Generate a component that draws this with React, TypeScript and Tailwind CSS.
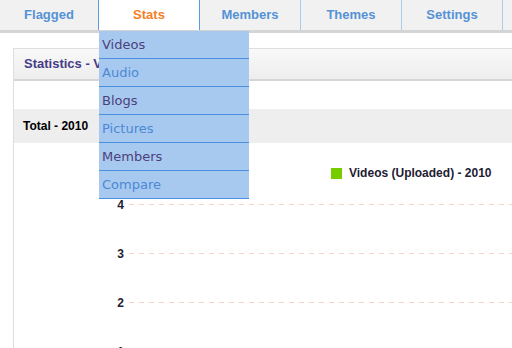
import React from 'react';

const tabs = [
  { label: 'Flagged', cls: 'w-[98px]' },
  { label: 'Stats', cls: 'w-[102px] bg-white border-x border-[#5b9be0] text-[#f58026]', active: true },
  { label: 'Members', cls: 'w-[101px] border-r border-[#a9cdee]' },
  { label: 'Themes', cls: 'w-[101px] border-r border-[#a9cdee]' },
  { label: 'Settings', cls: 'w-[101px] border-r border-[#a9cdee]' },
];

const menu = ['Videos', 'Audio', 'Blogs', 'Pictures', 'Members', 'Compare'];

const grid = [4, 3, 2, 1];

export default function App() {
  return (
    <div className="relative w-[512px] h-[348px] overflow-hidden bg-white font-['Liberation_Sans',Arial,sans-serif]">
      {/* tab bar */}
      <div className="flex h-[33px] bg-[#f1f1f1] border-b-[3px] border-[#d4d4d4]">
        {tabs.map((t) => (
          <div
            key={t.label}
            className={`h-[30px] flex items-center justify-center text-[13px] font-bold ${t.active ? '' : 'text-[#5592d6]'} ${t.cls}`}
          >
            {t.label}
          </div>
        ))}
        <div className="flex-1" />
      </div>

      {/* stats panel */}
      <div className="ml-[13px] mt-[15px] border-l border-t border-[#dedede] w-[520px]">
        <div className="h-[32px] bg-gradient-to-b from-[#f9f9f9] to-[#ededed] border-b-2 border-[#d6d6d6] flex items-center pl-[10px] text-[13px] font-bold text-[#463c87]">
          Statistics - Videos
        </div>
        <div className="h-[28px]" />
        <div className="h-[34px] bg-[#eeeeee] flex items-center pl-[9px] text-[12px] font-bold text-black">
          Total - 2010
        </div>
        <div className="h-[21px]" />
        <div className="flex items-center ml-[317px] gap-[7px]">
          <div className="w-[11px] h-[11px] bg-[#77cc00]" />
          <span className="text-[12px] font-bold text-[#231c33]">Videos (Uploaded) - 2010</span>
        </div>
        <div className="h-[18px]" />
        <div className="flex flex-col gap-[40px]">
          {grid.map((n) => (
            <div key={n} className="flex items-center h-[9px]">
              <span className="w-[110px] text-right text-[12px] font-bold text-[#231c33] leading-none">{n}</span>
              <div className="ml-[5px] flex-1 h-px bg-[repeating-linear-gradient(90deg,#f7d3cc_0_5px,transparent_5px_10px)]" />
            </div>
          ))}
        </div>
      </div>

      {/* dropdown menu */}
      <div className="absolute left-[99px] top-[31px] w-[150px] bg-[#a7c9ef] font-['DejaVu_Sans',Verdana,sans-serif]">
        {menu.map((m, i) => (
          <div
            key={m}
            className={`h-[28px] border-b border-[#4a8fe0] flex items-center pl-[3px] text-[13px] ${i % 2 === 0 ? 'text-[#4d3f7d]' : 'text-[#4b88d6]'}`}
          >
            {m}
          </div>
        ))}
      </div>
    </div>
  );
}
